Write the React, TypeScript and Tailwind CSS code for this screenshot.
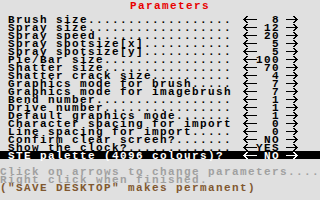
import React from 'react';

const params: [string, string][] = [
  ['Brush size', '8'],
  ['Spray size', '12'],
  ['Spray speed', '20'],
  ['Spray spotsize[x]', '5'],
  ['Spray spotsize[y]', '5'],
  ['Pie/Bar size', '100'],
  ['Shatter size', '70'],
  ['Shatter crack size', '4'],
  ['Graphics mode for brush', '7'],
  ['Graphics mode for imagebrush', '7'],
  ['Bend number', '1'],
  ['Drive number', '1'],
  ['Default graphics mode', '1'],
  ['Character spacing for import', '0'],
  ['Line spacing for import', '0'],
  ['Confirm clear screen?', 'NO'],
  ['Show the clock?', 'YES'],
];

const dots = (s: string) => s.padEnd(28, '.');

function LeftArrow() {
  return (
    <svg width="16" height="8" viewBox="0 0 16 8" className="block shrink-0 overflow-visible" shapeRendering="crispEdges" fill="currentColor">
      <rect x="3" y="4" width="14" height="1" />
      <rect x="4" y="3" width="2" height="1" />
      <rect x="5" y="2" width="2" height="1" />
      <rect x="6" y="1" width="2" height="1" />
      <rect x="4" y="5" width="2" height="1" />
      <rect x="5" y="6" width="2" height="1" />
      <rect x="6" y="7" width="2" height="1" />
    </svg>
  );
}

function RightArrow() {
  return (
    <svg width="24" height="8" viewBox="0 0 24 8" className="block shrink-0" shapeRendering="crispEdges" fill="currentColor">
      <rect x="6" y="4" width="12" height="1" />
      <rect x="15" y="3" width="2" height="1" />
      <rect x="14" y="2" width="2" height="1" />
      <rect x="13" y="1" width="2" height="1" />
      <rect x="15" y="5" width="2" height="1" />
      <rect x="14" y="6" width="2" height="1" />
      <rect x="13" y="7" width="2" height="1" />
    </svg>
  );
}

function Row({ label, value, active }: { label: string; value: string; active?: boolean }) {
  return (
    <div className={`flex h-[8px] leading-[10px] ${active ? 'bg-black text-white' : 'text-black'}`}>
      <span className="w-[8px] shrink-0" />
      <span className="w-[224px] shrink-0 whitespace-pre">{label}</span>
      <span className="w-[8px] shrink-0" />
      <LeftArrow />
      <span className="w-[24px] shrink-0 whitespace-pre">{value.padStart(3, ' ')}</span>
      <RightArrow />
    </div>
  );
}

export default function App() {
  return (
    <div className="w-[320px] h-[200px] overflow-hidden bg-[#e0e0e0] pt-[1px] font-['Liberation_Mono',monospace] font-bold text-[11px] tracking-[1.4px]">
      <div className="h-[8px] leading-[10px] pl-[130px] text-[#e80000]">Parameters</div>
      <div className="mt-[6px]">
        {params.map(([l, v]) => (
          <Row key={l} label={dots(l)} value={v} />
        ))}
        <Row label="STE palette (4096 colours)?" value="NO" active />
        <div className="h-[8px]" />
        <div className="h-[8px] leading-[10px] whitespace-pre text-[#a0a0a0]">Click on arrows to change parameters....</div>
        <div className="h-[8px] leading-[10px] whitespace-pre text-[#a0a0a0]">Right click when finished.</div>
        <div className="h-[8px] leading-[10px] whitespace-pre text-[#805830]">("SAVE DESKTOP" makes permanent)</div>
      </div>
    </div>
  );
}
